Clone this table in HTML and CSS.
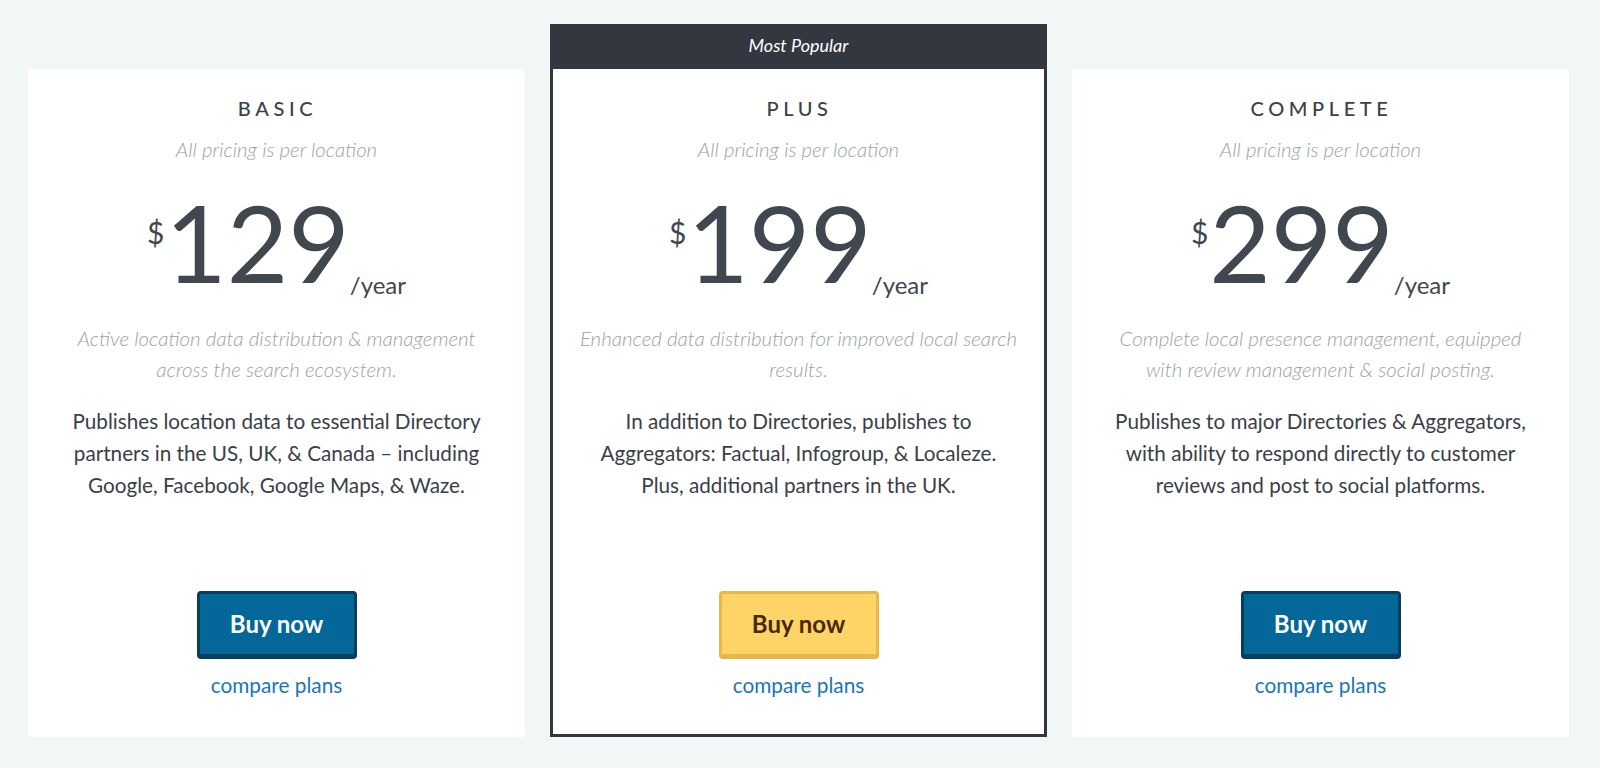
FILE: index.html
```html
<!DOCTYPE html>
<html lang="en">
<head>
<meta charset="utf-8">
<title>Pricing</title>
<link rel="stylesheet" href="styles.css">
</head>
<body>
<main class="plans">
  <section class="card">
    <div class="card-body">
      <h2 class="plan-name">BASIC</h2>
      <p class="plan-note">All pricing is per location</p>
      <div class="price">
        <span class="currency">$</span><span class="amount">129</span><span class="period">/year</span>
      </div>
      <p class="plan-summary">Active location data distribution &amp; management<br>across the search ecosystem.</p>
      <p class="plan-detail">Publishes location data to essential Directory<br>partners in the US, UK, &amp; Canada – including<br>Google, Facebook, Google Maps, &amp; Waze.</p>
      <div class="actions">
        <a class="btn btn-blue" href="#">Buy now</a>
        <a class="compare" href="#">compare plans</a>
      </div>
    </div>
  </section>
  <section class="card card-popular">
    <div class="popular-label">Most Popular</div>
    <div class="card-body">
      <h2 class="plan-name">PLUS</h2>
      <p class="plan-note">All pricing is per location</p>
      <div class="price">
        <span class="currency">$</span><span class="amount">199</span><span class="period">/year</span>
      </div>
      <p class="plan-summary">Enhanced data distribution for improved local search<br>results.</p>
      <p class="plan-detail">In addition to Directories, publishes to<br>Aggregators: Factual, Infogroup, &amp; Localeze.<br>Plus, additional partners in the UK.</p>
      <div class="actions">
        <a class="btn btn-yellow" href="#">Buy now</a>
        <a class="compare" href="#">compare plans</a>
      </div>
    </div>
  </section>
  <section class="card">
    <div class="card-body">
      <h2 class="plan-name">COMPLETE</h2>
      <p class="plan-note">All pricing is per location</p>
      <div class="price">
        <span class="currency">$</span><span class="amount">299</span><span class="period">/year</span>
      </div>
      <p class="plan-summary">Complete local presence management, equipped<br>with review management &amp; social posting.</p>
      <p class="plan-detail">Publishes to major Directories &amp; Aggregators,<br>with ability to respond directly to customer<br>reviews and post to social platforms.</p>
      <div class="actions">
        <a class="btn btn-blue" href="#">Buy now</a>
        <a class="compare" href="#">compare plans</a>
      </div>
    </div>
  </section>
</main>
</body>
</html>
```
FILE: styles.css
```css
* { box-sizing: border-box; }
html, body { margin: 0; padding: 0; }
body {
  background: #f1f6f6;
  font-family: Lato, "Open Sans", "Liberation Sans", sans-serif;
  color: #40474e;
  width: 1600px;
  height: 768px;
  overflow: hidden;
}
.plans {
  display: grid;
  grid-template-columns: repeat(3, 497px);
  column-gap: 25px;
  align-items: end;
  padding: 24px 0 31px 28px;
  height: 768px;
}
.card {
  background: #fff;
  height: 668px;
  display: flex;
  flex-direction: column;
}
.card-popular {
  height: 713px;
  border: 3px solid #33373f;
}
.popular-label {
  height: 42px;
  background: #33373f;
  color: #fff;
  font-style: italic;
  font-size: 18px;
  line-height: 36px;
  text-align: center;
  flex: none;
}
.card-body {
  flex: 1;
  display: flex;
  flex-direction: column;
  align-items: center;
  text-align: center;
  padding: 27px 20px 40px;
}
.card-popular .card-body { padding: 27px 17px 37px; }
.plan-name {
  margin: 0;
  font-size: 20px;
  line-height: 24px;
  font-weight: 500;
  letter-spacing: 4.6px;
  padding-left: 2px;
  color: #3b4148;
}
.plan-note {
  margin: 14px 0 0;
  font-size: 20.4px;
  line-height: 30px;
  font-weight: 300;
  font-style: italic;
  color: #9aa2a3;
}
.price {
  display: flex;
  align-items: flex-start;
  margin-top: 25px;
  height: 106px;
  color: #40474e;
}
.currency {
  font-size: 30px;
  line-height: 30px;
  margin-top: 28px;
  margin-right: 1px;
}
.amount {
  font-size: 106px;
  line-height: 106px;
}
.period {
  font-size: 24px;
  line-height: 24px;
  align-self: flex-end;
  margin-bottom: -2px;
}
.plan-summary {
  margin: 28px 0 0;
  font-size: 20.5px;
  line-height: 31px;
  font-weight: 300;
  font-style: italic;
  color: #9aa2a3;
}
.plan-detail {
  margin: 20px 0 0;
  font-size: 20.7px;
  line-height: 32px;
  color: #3a4047;
}
.actions {
  margin-top: auto;
  display: flex;
  flex-direction: column;
  align-items: center;
}
.btn {
  display: block;
  width: 160px;
  height: 68px;
  border-radius: 4px;
  border-style: solid;
  border-width: 3px 3px 5px;
  font-size: 24px;
  font-weight: 700;
  line-height: 60px;
  text-decoration: none;
  text-align: center;
}
.btn-blue {
  background: #036799;
  border-color: #053f5e;
  color: #fff;
}
.btn-yellow {
  background: #ffd466;
  border-color: #e8b64c;
  color: #4a2806;
}
.compare {
  margin-top: 14px;
  font-size: 20.8px;
  line-height: 24px;
  color: #1a76b5;
  text-decoration: none;
}
```
